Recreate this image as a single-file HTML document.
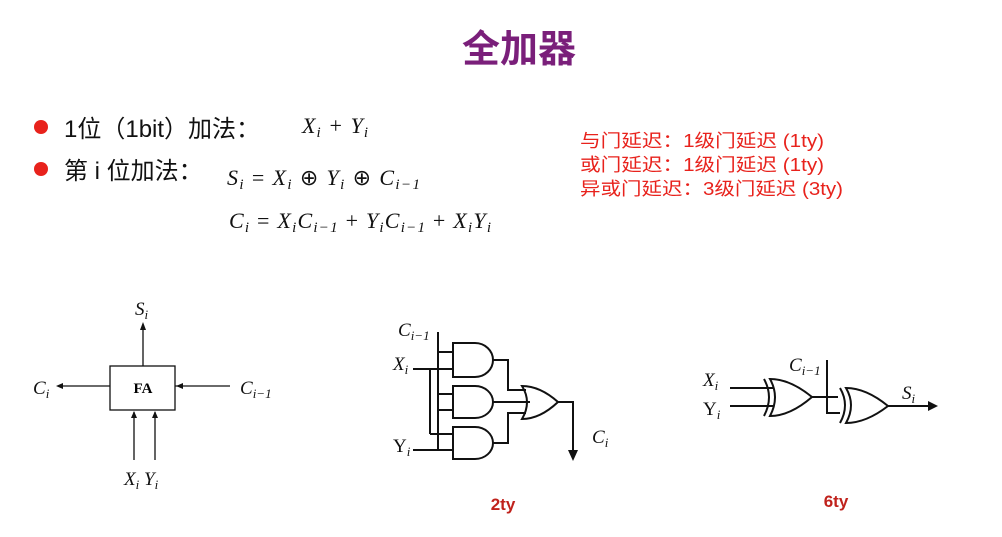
<!DOCTYPE html>
<html><head><meta charset="utf-8"><style>
html,body{margin:0;padding:0;background:#fff;}
svg{display:block}
.cj{font-family:"Liberation Sans","Noto Sans CJK SC",sans-serif;}
.m{font-family:"Liberation Serif",serif;font-style:italic;}
.r{font-family:"Liberation Serif",serif;}
</style></head><body>
<svg width="1002" height="537" viewBox="0 0 1002 537" xmlns="http://www.w3.org/2000/svg">
<text x="519" y="62" text-anchor="middle" class="cj" font-size="38" font-weight="bold" fill="#7a1f7a">全加器</text>
<circle cx="41" cy="127" r="7" fill="#e8221c"/>
<circle cx="41" cy="169" r="7" fill="#e8221c"/>
<text x="64" y="137" class="cj" font-size="24" fill="#111">1位（1bit）加法：</text>
<text x="64" y="179" class="cj" font-size="24" fill="#111">第 i 位加法：</text>
<g class="m" font-size="22" fill="#111">
<text x="302" y="133" textLength="66" lengthAdjust="spacing">X<tspan font-size="15" dy="4">i</tspan><tspan dy="-4"> + Y</tspan><tspan font-size="15" dy="4">i</tspan></text>
<text x="227" y="185" textLength="193" lengthAdjust="spacing">S<tspan font-size="15" dy="4">i</tspan><tspan dy="-4" font-style="normal"> = </tspan>X<tspan font-size="15" dy="4">i</tspan><tspan dy="-4" font-style="normal"> ⊕ </tspan>Y<tspan font-size="15" dy="4">i</tspan><tspan dy="-4" font-style="normal"> ⊕ </tspan>C<tspan font-size="15" dy="4">i−1</tspan></text>
<text x="229" y="228" textLength="262" lengthAdjust="spacing">C<tspan font-size="15" dy="4">i</tspan><tspan dy="-4" font-style="normal"> = </tspan>X<tspan font-size="15" dy="4">i</tspan><tspan dy="-4">C</tspan><tspan font-size="15" dy="4">i−1</tspan><tspan dy="-4" font-style="normal"> + </tspan>Y<tspan font-size="15" dy="4">i</tspan><tspan dy="-4">C</tspan><tspan font-size="15" dy="4">i−1</tspan><tspan dy="-4" font-style="normal"> + </tspan>X<tspan font-size="15" dy="4">i</tspan><tspan dy="-4">Y</tspan><tspan font-size="15" dy="4">i</tspan></text>
</g>
<g class="cj" font-size="18" fill="#e8221c">
<text x="580" y="147" textLength="244" lengthAdjust="spacingAndGlyphs">与门延迟：1级门延迟 (1ty)</text>
<text x="580" y="171" textLength="244" lengthAdjust="spacingAndGlyphs">或门延迟：1级门延迟 (1ty)</text>
<text x="580" y="195" textLength="263" lengthAdjust="spacingAndGlyphs">异或门延迟：3级门延迟 (3ty)</text>
</g>
<!-- FA -->
<g stroke="#111" stroke-width="1.3" fill="none">
<rect x="110" y="366" width="65" height="44"/>
<line x1="143" y1="366" x2="143" y2="327"/>
<line x1="110" y1="386" x2="60" y2="386"/>
<line x1="230" y1="386" x2="175" y2="386"/>
<line x1="134" y1="460" x2="134" y2="412"/>
<line x1="155" y1="460" x2="155" y2="412"/>
</g>
<g fill="#111">
<polygon points="143,322 140,330 146,330"/>
<polygon points="56,386 63,383 63,389"/>
<polygon points="176,386 183,383 183,389"/>
<polygon points="134,411 131,418 137,418"/>
<polygon points="155,411 152,418 158,418"/>
</g>
<text x="143" y="393" text-anchor="middle" class="r" font-size="15" font-weight="bold">FA</text>
<g class="m" font-size="19" fill="#111">
<text x="135" y="315">S<tspan font-size="13" dy="4">i</tspan></text>
<text x="33" y="394">C<tspan font-size="13" dy="4">i</tspan></text>
<text x="240" y="394">C<tspan font-size="13" dy="4">i−1</tspan></text>
<text x="124" y="485">X<tspan font-size="13" dy="4">i</tspan><tspan dy="-4"> Y</tspan><tspan font-size="13" dy="4">i</tspan></text>
</g>
<!-- carry circuit -->
<g stroke="#111" stroke-width="2" fill="none">
<line x1="438" y1="332" x2="438" y2="450"/>
<line x1="413" y1="369" x2="453" y2="369"/>
<line x1="430" y1="369" x2="430" y2="434"/>
<line x1="413" y1="450" x2="453" y2="450"/>
<line x1="438" y1="352" x2="453" y2="352"/>
<line x1="438" y1="394" x2="453" y2="394"/>
<line x1="438" y1="410" x2="453" y2="410"/>
<line x1="430" y1="434" x2="453" y2="434"/>
<path d="M453 343 H475 A18 17 0 0 1 475 377 H453 Z"/>
<path d="M453 386 H475 A18 16 0 0 1 475 418 H453 Z"/>
<path d="M453 427 H475 A18 16 0 0 1 475 459 H453 Z"/>
<path d="M493 360 H508 V390 H526"/>
<path d="M493 402 H530"/>
<path d="M493 443 H508 V413 H526"/>
<path d="M522 386 Q540 386 558 402 Q540 419 522 419 Q532 402 522 386 Z"/>
<path d="M558 402 H573 V452"/>
</g>
<polygon points="573,461 568,450 578,450" fill="#111"/>
<g class="m" font-size="19" fill="#111">
<text x="398" y="336">C<tspan font-size="13" dy="4">i−1</tspan></text>
<text x="393" y="370">X<tspan font-size="13" dy="4">i</tspan></text>
<text x="393" y="452" font-style="normal">Y<tspan font-size="13" dy="4" font-style="italic">i</tspan></text>
<text x="592" y="443">C<tspan font-size="13" dy="4">i</tspan></text>
</g>
<text x="503" y="510" text-anchor="middle" class="cj" font-size="17" font-weight="bold" fill="#c0221c">2ty</text>
<!-- sum circuit -->
<g stroke="#111" stroke-width="2" fill="none">
<line x1="730" y1="388" x2="774" y2="388"/>
<line x1="730" y1="406" x2="774" y2="406"/>
<path d="M764 379 Q774 397 764 416"/>
<path d="M770 379 Q790 379 812 397 Q790 416 770 416 Q780 397 770 379 Z"/>
<path d="M812 397 H838"/>
<path d="M827 360 V413 H840"/>
<path d="M840 388 Q850 405 840 423"/>
<path d="M846 388 Q866 388 888 406 Q866 423 846 423 Q856 405 846 388 Z"/>
<path d="M888 406 H930"/>
</g>
<polygon points="938,406 928,401 928,411" fill="#111"/>
<g class="m" font-size="19" fill="#111">
<text x="789" y="371">C<tspan font-size="13" dy="4">i−1</tspan></text>
<text x="703" y="386">X<tspan font-size="13" dy="4">i</tspan></text>
<text x="703" y="415" font-style="normal">Y<tspan font-size="13" dy="4" font-style="italic">i</tspan></text>
<text x="902" y="399">S<tspan font-size="13" dy="4">i</tspan></text>
</g>
<text x="836" y="507" text-anchor="middle" class="cj" font-size="17" font-weight="bold" fill="#c0221c">6ty</text>
</svg>
</body></html>
